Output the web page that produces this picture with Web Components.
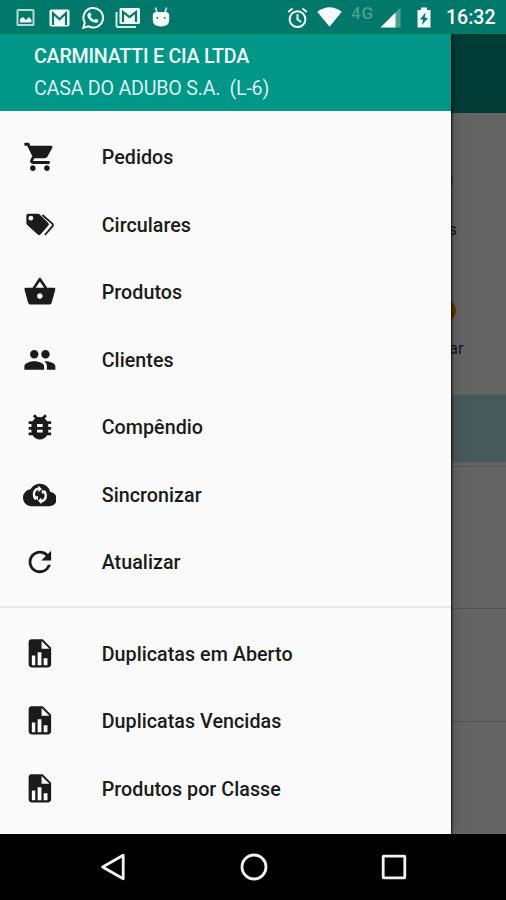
<!DOCTYPE html>
<html lang="pt-BR">
<head>
<meta charset="utf-8">
<title>Menu</title>
<style>
html,body{margin:0;height:100%;overflow:hidden;background:#000}
body{font-family:Roboto,"Liberation Sans",sans-serif}
</style>
</head>
<body>
<app-screen>
  <status-bar slot="status"></status-bar>
  <app-backdrop slot="content"></app-backdrop>
  <nav-drawer slot="drawer">
    <drawer-header slot="header"><span slot="title">CARMINATTI E CIA LTDA</span><span slot="sub">CASA DO ADUBO S.A.&nbsp; (L-6)</span></drawer-header>
    <drawer-item icon="cart">Pedidos</drawer-item>
    <drawer-item icon="tags">Circulares</drawer-item>
    <drawer-item icon="basket">Produtos</drawer-item>
    <drawer-item icon="people">Clientes</drawer-item>
    <drawer-item icon="bug">Compêndio</drawer-item>
    <drawer-item icon="cloud">Sincronizar</drawer-item>
    <drawer-item icon="refresh">Atualizar</drawer-item>
    <drawer-divider></drawer-divider>
    <drawer-item icon="report">Duplicatas em Aberto</drawer-item>
    <drawer-item icon="report">Duplicatas Vencidas</drawer-item>
    <drawer-item icon="report">Produtos por Classe</drawer-item>
  </nav-drawer>
  <system-nav slot="nav"></system-nav>
</app-screen>
<script>
const define = (name, html, init) => customElements.define(name, class extends HTMLElement {
  constructor() {
    super();
    const t = document.createElement('template');
    t.innerHTML = html;
    this.attachShadow({mode: 'open'}).appendChild(t.content.cloneNode(true));
  }
  connectedCallback() { if (init) init(this, this.shadowRoot); }
});

define('app-screen', `<style>
:host{display:flex;flex-direction:column;width:506px;height:900px;overflow:hidden}
main{position:relative;flex:1;overflow:hidden;min-height:0}
.scrim{position:absolute;inset:0;background:rgba(0,0,0,.6)}
.drawer{position:absolute;left:0;top:0;bottom:0;width:450.5px}
</style><slot name="status"></slot><main><slot name="content"></slot><div class="scrim"></div><div class="drawer"><slot name="drawer"></slot></div></main><slot name="nav"></slot>`);

define('status-bar', `<style>
:host{display:flex;height:34px;box-sizing:border-box;background:#00796b;color:#fff;align-items:center;justify-content:space-between;padding:0 10.5px 0 16px}
div{display:flex;align-items:center}
svg{display:block;fill:#f4fbf9}
.net{font-size:17px;font-weight:500;line-height:20px;color:#4b9f95;letter-spacing:.9px;margin:-9px 6px 0 9px}
.time{font-size:19.5px;font-weight:500;line-height:34px;letter-spacing:0;margin-left:15px;padding-top:2px}
</style>
<div>
<svg width="19" height="19" viewBox="0 0 19 19" style="margin-top:1px"><path fill="#b9d9d2" fill-rule="evenodd" d="M2 1h15q1.500 0 1.500 1.500v14q0 1.500-1.500 1.500H2q-1.500 0-1.500-1.500v-14Q.5 1 2 1zM2.500 3v13h14V3z"/><path d="M4 14.500V11l3-2 3 3 3-3 2.500 3v2.500z"/></svg>
<svg width="21" height="18" viewBox="0 0 21 18" style="margin-left:14px;margin-top:1px"><rect x=".5" y=".5" width="20" height="17" rx="1.800"/><path d="M4 16V4.300l6.500 6 6.500-6V16" fill="none" stroke="#00796b" stroke-width="2.200"/></svg>
<svg width="24" height="24" viewBox="0 0 24 24" style="margin-left:11px;margin-top:1px"><path d="M2.300 21.700l1.500-5A9.800 9.800 0 1 1 7.500 20.300z" fill="none" stroke="#f4fbf9" stroke-width="2"/><path d="M8.300 6.600c.5-.4 1.100-.2 1.300.3l.8 1.900c.1.500-.9 1.400-.9 1.700.8 1.600 2 2.700 3.900 3.500.4.100 1.200-1.300 1.700-1.200l2.200 1.100c.4.300-.1 2-1 2.500-1.100.6-2.400.5-4.300-.3-2.500-1-4.800-3.700-5.500-5.700-.6-1.700.7-3 1.800-3.800z"/></svg>
<svg width="26" height="22" viewBox="0 0 26 22" style="margin-left:9.500px;margin-top:1px"><path d="M1.500 5v13.500Q1.500 20 3 20h18" fill="none" stroke="#d5ebe7" stroke-width="2"/><rect x="4.500" y="1" width="20.500" height="16" rx="1.500"/><path d="M8 15V5l6.500 5L21 5v10" fill="none" stroke="#00796b" stroke-width="2.200"/></svg>
<svg width="18" height="22" viewBox="0 0 18 22" style="margin-left:11px;margin-top:-1px"><path d="M3.500 1.500l1.500 5M14.500 1.500L13 6.500" stroke="#d5ebe7" stroke-width="1.600"/><path d="M.8 9.500Q.8 6 4.500 6h9q3.700 0 3.700 3.500V14q0 6.500-8.200 6.500T.8 14z"/><circle cx="5.300" cy="12" r=".9" fill="#00796b"/><circle cx="12.700" cy="12" r=".9" fill="#00796b"/></svg>
</div>
<div>
<svg width="21" height="22" viewBox="0 0 21 22" style="margin-top:1px"><g fill="none" stroke="#f4fbf9" stroke-width="2"><circle cx="10.500" cy="12.200" r="7.900"/><path d="M1.200 5L5.500 1.400M19.800 5l-4.300-3.600M10.500 7v5.500l3.700 2.500"/></g></svg>
<svg width="25" height="20" viewBox="0 0 25 20" style="margin-left:9px"><path d="M.2 4.700Q12.500-4.300 24.800 4.700L12.500 19.800z"/></svg>
<span class="net">4G</span>
<svg width="21" height="21" viewBox="0 0 21 21" style="margin-top:1px"><path fill="#4ba094" d="M20.500.5v20H.5z"/><path d="M15.500 5.500v15H.5z"/></svg>
<svg width="14" height="21" viewBox="0 0 14 21" style="margin-left:16px;margin-top:0"><path d="M4 .5h6V3h3.500v17.500H.5V3H4z"/><path fill="#00796b" d="M8.500 5.500L3 12.500h3L5 18l6-7H7.800z"/></svg>
<span class="time">16:32</span>
</div>`);

define('app-backdrop', `<style>
:host{display:flex;flex-direction:column;height:100%;background:#fafafa;color:#333;overflow:hidden}
.bar{height:78.500px;background:#009688;flex:none}
.grid{display:grid;grid-template-rows:119px 119px;height:282px;flex:none;justify-items:start}
.tile{display:flex;flex-direction:column;align-items:flex-start;height:119px;padding-left:431px;box-sizing:border-box;padding-top:57px}
.dot{width:21.500px;height:21.500px;border-radius:50%;background:#f58a00;flex:none}
.two .dot{width:25px;height:25px;margin-top:9px}
.tile span{flex:none;font-size:16.500px;line-height:20px;margin-top:28.500px;padding-left:17.500px}
.tile.two span{margin-top:16px;padding-left:18px}
.band{height:67.500px;background:#b2dfdb;flex:none;box-shadow:0 0 2px #bbd5d2}
.gap{height:4px;flex:none;border-bottom:1px solid #cfcfcf}
.row{height:142px;box-sizing:border-box;border-bottom:1.500px solid #ccc;flex:none}
.row.b{height:112.500px}
</style><div class="bar"></div><div class="grid"><div class="tile"><i class="dot"></i><span>s</span></div><div class="tile two"><i class="dot"></i><span>ar</span></div></div><div class="band"></div><div class="gap"></div><div class="row"></div><div class="row b"></div>`);

define('nav-drawer', `<style>
:host{display:flex;flex-direction:column;height:100%;background:#fafafa;box-shadow:0 0 2px 1px rgba(0,0,0,.85),0 0 14px rgba(0,0,0,.25)}
.list{display:flex;flex-direction:column;padding-top:12.300px}
</style><slot name="header"></slot><div class="list"><slot></slot></div>`);

define('drawer-header', `<style>
:host{display:flex;flex-direction:column;height:77px;box-sizing:border-box;background:#009688;color:#f0fbf9;padding:6.500px 0 0 34px}
div{line-height:32.500px;white-space:pre}
.t{font-size:19.700px;font-weight:500;letter-spacing:-.25px}
.s{font-size:19.700px;color:#d9f0ed;letter-spacing:-.24px}
</style><div class="t"><slot name="title"></slot></div><div class="s"><slot name="sub"></slot></div>`);

define('drawer-divider', `<style>:host{display:block;height:24.200px;padding-top:10.200px;box-sizing:border-box}div{height:2px;background:#e8e8e8}</style><div></div>`);

const icons = {
cart:'<path d="M7 18c-1.100 0-1.990.9-1.990 2S5.900 22 7 22s2-.9 2-2-.9-2-2-2zM1 2v2h2l3.600 7.590-1.350 2.450c-.16.28-.25.61-.25.96 0 1.100.9 2 2 2h12v-2H7.420c-.14 0-.25-.11-.25-.25l.03-.12.9-1.630h7.450c.75 0 1.410-.41 1.750-1.030l3.580-6.490A1.003 1.003 0 0 0 20 4H5.210l-.94-2H1zm16 16c-1.100 0-1.990.9-1.990 2s.89 2 1.990 2 2-.9 2-2-.9-2-2-2z"/>',
tags:'<path fill-rule="evenodd" d="M3.700 4.100h7q.7 0 1.200.5l6.100 6q.9.900 0 1.800l-5.600 6.400q-.9.900-1.900 0L3 12.100q-.6-.6-.6-1.400V5.400q0-1.300 1.300-1.300zM5.600 5.500a1.700 1.700 0 1 0 0 3.400 1.700 1.700 0 0 0 0-3.400z"/><path d="M13.200 5L20.400 11.300q.7.800 0 1.600L15 19.200" fill="none" stroke="currentColor" stroke-width="1.300" transform="translate(.6)"/>',
basket:'<path d="M17.210 9l-4.380-6.560c-.19-.28-.51-.42-.83-.42-.32 0-.64.140-.83.430L6.790 9H2c-.55 0-1 .45-1 1 0 .09.010.180.040.270l2.540 9.270c.23.84 1 1.460 1.920 1.460h13c.92 0 1.690-.62 1.930-1.460l2.540-9.270L23 10c0-.55-.45-1-1-1h-4.790zM9 9l3-4.400L15 9H9zm3 8c-1.100 0-2-.9-2-2s.9-2 2-2 2 .9 2 2-.9 2-2 2z"/>',
people:'<path d="M16 11c1.660 0 2.990-1.340 2.990-3S17.660 5 16 5s-3 1.340-3 3 1.340 3 3 3zm-8 0c1.660 0 2.990-1.340 2.990-3S9.660 5 8 5 5 6.340 5 8s1.340 3 3 3zm0 2c-2.330 0-7 1.170-7 3.500V19h14v-2.500c0-2.330-4.670-3.500-7-3.500zm8 0c-.29 0-.62.020-.97.050 1.160.84 1.970 1.970 1.970 3.450V19h6v-2.500c0-2.330-4.670-3.500-7-3.500z"/>',
bug:'<path d="M20 8h-2.810a5.985 5.985 0 0 0-1.820-1.960L17 4.410 15.590 3l-2.170 2.170a6.002 6.002 0 0 0-2.830 0L8.410 3 7 4.410l1.620 1.630C7.880 6.550 7.260 7.220 6.810 8H4v2h2.090c-.05.33-.09.66-.09 1v1H4v2h2v1c0 .34.040.67.090 1H4v2h2.810c1.040 1.790 2.970 3 5.190 3s4.150-1.210 5.190-3H20v-2h-2.090c.05-.33.090-.66.090-1v-1h2v-2h-2v-1c0-.34-.04-.67-.09-1H20V8zm-6 8h-4v-2h4v2zm0-4h-4v-2h4v2z"/>',
cloud:'<path d="M19.350 10.040A7.490 7.490 0 0 0 12 4C9.110 4 6.600 5.640 5.350 8.040A5.994 5.994 0 0 0 0 14c0 3.310 2.690 6 6 6h13c2.760 0 5-2.240 5-5 0-2.640-2.050-4.780-4.650-4.960z"/><path d="M11.300 7.400Q7.500 8.300 7.800 12q.1 1.900 1.400 3.200M12.700 16.700q3.700-.9 3.500-4.600-.1-1.800-1.400-3.100" fill="none" stroke="#fafafa" stroke-width="1.700"/><path fill="#fafafa" d="M10.900 5.400v4.800l2.400-2.400zM13.100 18.600v-4.800l-2.400 2.400zM8.200 12.900h2.500v3.300zM15.800 11h-2.500V7.800z"/>',
refresh:'<path d="M17.650 6.350A7.958 7.958 0 0 0 12 4c-4.420 0-7.990 3.580-7.990 8s3.570 8 7.990 8c3.730 0 6.840-2.550 7.730-6h-2.080A5.990 5.990 0 0 1 12 18c-3.310 0-6-2.690-6-6s2.690-6 6-6c1.660 0 3.140.69 4.220 1.780L13 11h7V4l-2.350 2.350z"/>',
report:'<g transform="translate(0 -.4)"><path d="M6 2c-1.100 0-2 .9-2 2v16c0 1.100.9 2 2 2h12c1.100 0 2-.9 2-2V8l-6-6H6z"/><path fill="#fafafa" d="M13.200 3.200V8.800h5.600zM6.300 13.500h2.400v7H6.300zM10.400 11.300h2.700v9.200h-2.700zM14.700 15.500h2.700v5h-2.700z"/></g>'
};
define('drawer-item', `<style>
:host{display:flex;align-items:center;height:67.500px;padding-left:22.700px;box-sizing:border-box;color:#1b1b1b}
svg{width:33.750px;height:33.750px;fill:currentColor;flex:none}
.label{margin-left:45.250px;font-size:19.700px;font-weight:500;line-height:28px;letter-spacing:.04px;white-space:nowrap;padding-top:2px}
</style><svg viewBox="0 0 24 24"></svg><span class="label"><slot></slot></span>`,
(el, root) => { root.querySelector('svg').innerHTML = icons[el.getAttribute('icon')]; });

define('system-nav', `<style>
:host{display:flex;height:66.500px;background:#000;justify-content:space-between;align-items:center;padding:0 99px 0 100px;box-sizing:border-box}
svg{display:block;fill:none;stroke:#f2f2f2;stroke-width:2.800;stroke-linejoin:round}
</style><svg width="26" height="30"><path d="M23.200 3.200v23.600L2.600 15z"/></svg><svg width="30" height="30"><circle cx="15" cy="15" r="12"/></svg><svg width="26" height="26"><rect x="2.200" y="2.200" width="21.600" height="21.600" rx=".5"/></svg>`);
</script>
</body>
</html>
